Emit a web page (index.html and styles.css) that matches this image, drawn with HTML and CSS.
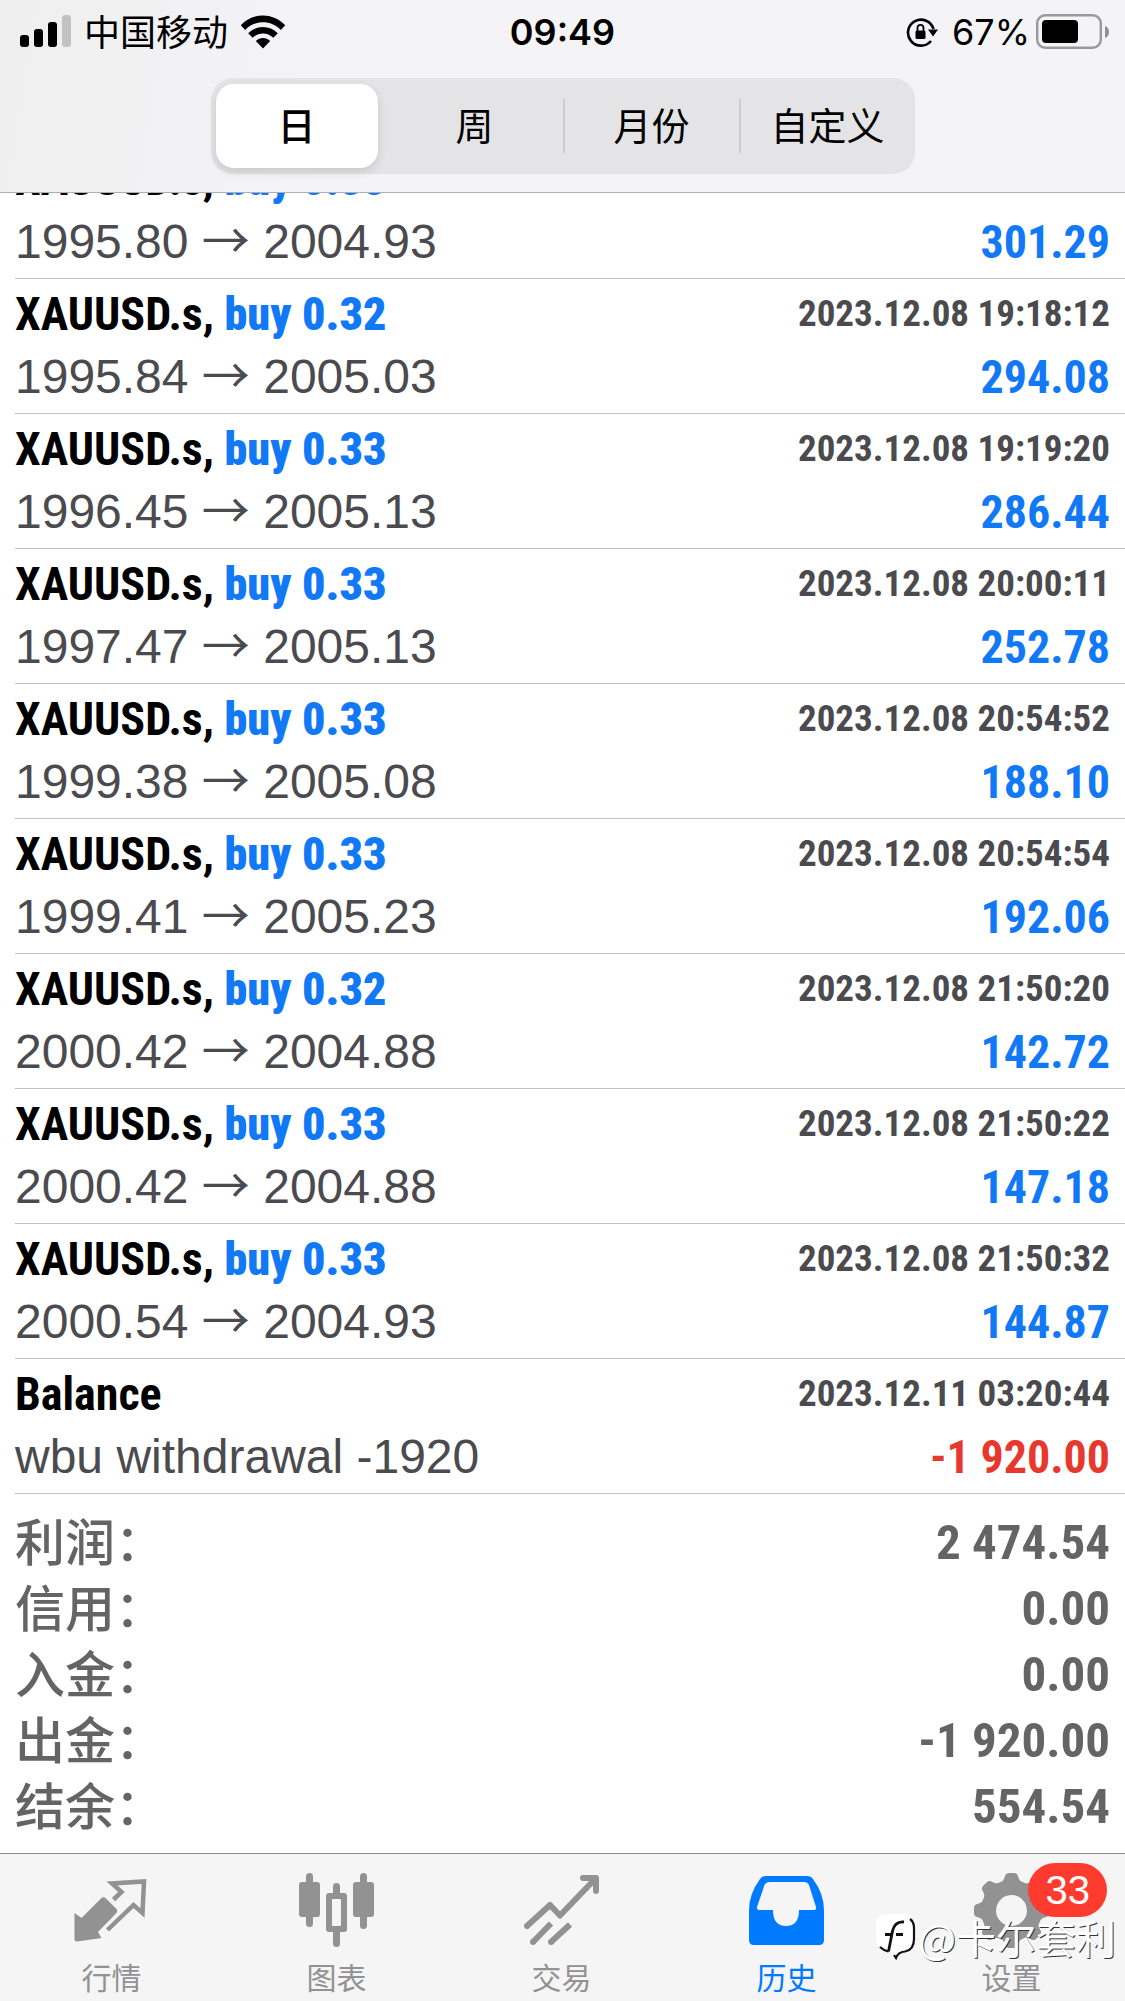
FILE: index.html
```html
<!DOCTYPE html>
<html lang="zh-CN">
<head>
<meta charset="utf-8">
<meta name="viewport" content="width=device-width, initial-scale=1">
<title>历史</title>
<link rel="stylesheet" href="styles.css">
</head>
<body>
<div class="app">
  <header class="top">
    <div class="status">
      <div class="status-left">
        <svg width="52" height="34" viewBox="0 0 52 34" aria-hidden="true">
          <rect x="0" y="20" width="9" height="12" rx="3"/>
          <rect x="14" y="14" width="9" height="18" rx="3"/>
          <rect x="28" y="7" width="9" height="25" rx="3"/>
          <rect x="42" y="0" width="9" height="32" rx="3" fill="#c2c2c3"/>
        </svg>
        <span class="carrier">中国移动</span>
        <svg width="46" height="34" viewBox="0 0 46 34" aria-hidden="true">
          <path d="M.8 10.300C13-2.800 33-2.800 45.200 10.300L40.800 14.900C31 4.800 15 4.800 5.200 14.900Z"/>
          <path d="M8.200 18.200C16.500 9.800 29.500 9.800 37.800 18.200L33.300 22.700C27.500 17 18.500 17 12.700 22.700Z"/>
          <path d="M15.800 26C20 22 26 22 30.200 26L23 33.500Z"/>
        </svg>
      </div>
      <time class="clock">09:49</time>
      <div class="status-right">
        <svg width="32" height="32" viewBox="0 0 32 32" aria-hidden="true">
          <path d="M27.500 13A13 13 0 1 0 25 25" fill="none" stroke="#000" stroke-width="2.600"/>
          <path d="M22 13.500H32L27 20.500Z"/>
          <rect x="9.500" y="14.500" width="10" height="8.500" rx="1.500"/>
          <path d="M11.500 15V11.800a3 3 0 0 1 6 0V15" fill="none" stroke="#000" stroke-width="1.800"/>
        </svg>
        <span class="percent">67%</span>
        <svg width="74" height="36" viewBox="0 0 74 36" aria-hidden="true">
          <rect x="1.200" y="1.200" width="63.600" height="32.600" rx="8" fill="none" stroke="#9a9a9b" stroke-width="2.400"/>
          <rect x="6" y="6" width="36" height="23" rx="4"/>
          <path d="M69 12Q73 13.500 73 18T69 24Z" fill="#8f8f90"/>
        </svg>
      </div>
    </div>
    <div class="segments">
      <button class="segment segment-on" type="button">日</button>
      <button class="segment" type="button">周</button>
      <button class="segment segment-ruled" type="button">月份</button>
      <button class="segment segment-ruled" type="button">自定义</button>
    </div>
  </header>

  <main class="history">
    <ul class="deals">
      <li class="deal"><span class="name">XAUUSD.s, <b class="side">buy 0.33</b></span><span class="date"></span><span class="detail">1995.80 <i class="arrow">→</i> 2004.93</span><span class="profit">301.29</span></li>
      <li class="deal"><span class="name">XAUUSD.s, <b class="side">buy 0.32</b></span><time class="date">2023.12.08 19:18:12</time><span class="detail">1995.84 <i class="arrow">→</i> 2005.03</span><span class="profit">294.08</span></li>
      <li class="deal"><span class="name">XAUUSD.s, <b class="side">buy 0.33</b></span><time class="date">2023.12.08 19:19:20</time><span class="detail">1996.45 <i class="arrow">→</i> 2005.13</span><span class="profit">286.44</span></li>
      <li class="deal"><span class="name">XAUUSD.s, <b class="side">buy 0.33</b></span><time class="date">2023.12.08 20:00:11</time><span class="detail">1997.47 <i class="arrow">→</i> 2005.13</span><span class="profit">252.78</span></li>
      <li class="deal"><span class="name">XAUUSD.s, <b class="side">buy 0.33</b></span><time class="date">2023.12.08 20:54:52</time><span class="detail">1999.38 <i class="arrow">→</i> 2005.08</span><span class="profit">188.10</span></li>
      <li class="deal"><span class="name">XAUUSD.s, <b class="side">buy 0.33</b></span><time class="date">2023.12.08 20:54:54</time><span class="detail">1999.41 <i class="arrow">→</i> 2005.23</span><span class="profit">192.06</span></li>
      <li class="deal"><span class="name">XAUUSD.s, <b class="side">buy 0.32</b></span><time class="date">2023.12.08 21:50:20</time><span class="detail">2000.42 <i class="arrow">→</i> 2004.88</span><span class="profit">142.72</span></li>
      <li class="deal"><span class="name">XAUUSD.s, <b class="side">buy 0.33</b></span><time class="date">2023.12.08 21:50:22</time><span class="detail">2000.42 <i class="arrow">→</i> 2004.88</span><span class="profit">147.18</span></li>
      <li class="deal"><span class="name">XAUUSD.s, <b class="side">buy 0.33</b></span><time class="date">2023.12.08 21:50:32</time><span class="detail">2000.54 <i class="arrow">→</i> 2004.93</span><span class="profit">144.87</span></li>
      <li class="deal"><span class="name">Balance</span><time class="date">2023.12.11 03:20:44</time><span class="detail">wbu withdrawal -1920</span><span class="profit loss">-1 920.00</span></li>
    </ul>
    <dl class="totals">
      <div class="total"><dt>利润：</dt><dd>2 474.54</dd></div>
      <div class="total"><dt>信用：</dt><dd>0.00</dd></div>
      <div class="total"><dt>入金：</dt><dd>0.00</dd></div>
      <div class="total"><dt>出金：</dt><dd>-1 920.00</dd></div>
      <div class="total"><dt>结余：</dt><dd>554.54</dd></div>
    </dl>
  </main>

  <nav class="tabs">
    <a class="tab" href="#quotes">
      <svg width="75" height="76" viewBox="0 0 75 76" aria-hidden="true">
        <path d="M.5 40L7.500 45L26 26.500Q29 22.500 32 25.500L42 35.500Q44.500 38 42 40.500L24 59L27.500 65L3 68.500Q.5 68.500 .5 66Z" fill="currentColor"/>
        <path d="M39.500 26.500L47.500 19L38 10.500L70 8.500L68.500 40L59.500 32L33.500 57" fill="none" stroke="currentColor" stroke-width="4.500"/>
      </svg>
      <span>行情</span>
    </a>
    <a class="tab" href="#chart">
      <svg width="75" height="76" viewBox="0 0 75 76" aria-hidden="true">
        <g fill="currentColor">
          <rect x="7" y="0" width="7" height="54" rx="3.500"/><rect x="0" y="9" width="21" height="35" rx="3"/>
          <rect x="61" y="0" width="7" height="56" rx="3.500"/><rect x="54" y="9" width="21" height="35" rx="3"/>
          <rect x="34" y="10" width="7" height="14" rx="3.500"/><rect x="34" y="54" width="7" height="20" rx="3.500"/>
          <path fill-rule="evenodd" d="M30 20H45Q48 20 48 23V56Q48 59 45 59H30Q27 59 27 56V23Q27 20 30 20ZM34 26Q33 26 33 27V52Q33 53 34 53H41Q42 53 42 52V27Q42 26 41 26Z"/>
        </g>
      </svg>
      <span>图表</span>
    </a>
    <a class="tab" href="#trade">
      <svg width="75" height="76" viewBox="0 0 75 76" aria-hidden="true">
        <path d="M3 53L26 32L36 42.500L71 6M59 5H72V18" fill="none" stroke="currentColor" stroke-width="6" stroke-linecap="round" stroke-linejoin="round"/>
        <path d="M27 50.500L9 69M46 51.500L27 69" fill="none" stroke="currentColor" stroke-width="6"/>
        <circle cx="9" cy="69" r="3" fill="currentColor"/><circle cx="27" cy="69" r="3" fill="currentColor"/>
      </svg>
      <span>交易</span>
    </a>
    <a class="tab tab-on" href="#history">
      <svg width="75" height="76" viewBox="0 0 75 76" aria-hidden="true">
        <path fill="currentColor" fill-rule="evenodd" d="M17 3H58Q62 3 64 6Q75 21 75 37V67Q75 72 70 72H5Q0 72 0 67V37Q0 21 11 6Q13 3 17 3ZM21 9Q17 9 15.500 12L8 34Q8 37 10 37H24Q24 53 37 53T50 37H65Q68 37 67 34L60 12Q58.500 9 55 9Z"/>
      </svg>
      <span>历史</span>
    </a>
    <a class="tab" href="#settings">
      <svg width="75" height="76" viewBox="0 0 75 76" aria-hidden="true">
        <g fill="currentColor">
          <path fill-rule="evenodd" d="M37.500 7a30.500 30.500 0 1 0 .01 0ZM37.500 22a15.500 15.500 0 1 1-.01 0Z"/>
          <g id="cog">
            <path d="M26 10Q30 8 31 3Q32 0 35 0H40Q43 0 44 3Q45 8 49 10Z"/>
            <path d="M26 65Q30 67 31 72Q32 75 35 75H40Q43 75 44 72Q45 67 49 65Z"/>
          </g>
          <use href="#cog" transform="rotate(45 37.500 37.500)"/>
          <use href="#cog" transform="rotate(90 37.500 37.500)"/>
          <use href="#cog" transform="rotate(135 37.500 37.500)"/>
        </g>
      </svg>
      <span>设置</span>
      <em class="badge">33</em>
    </a>
    <div class="credit">
      <svg width="40" height="46" viewBox="0 0 40 46" aria-hidden="true">
        <path d="M11 0H27Q38 0 38 12V25Q38 36 29 37.500Q22 38 20 44L18 38L9 35Q0 33 0 24V12Q0 0 11 0Z" fill="#fff"/>
        <path d="M28 8Q19 7 16.500 17L12.500 37.500M9 20.500H15.500M20 20.500H27" fill="none" stroke="#111" stroke-width="2.800"/>
        <path d="M34 5Q38 8 38 14V25Q38 36 29 37.500Q22 38 20 44L18 41M4 33Q7 36 12.500 37.500" fill="none" stroke="#111" stroke-width="2.200"/>
      </svg>
      <span>@卡尔套利</span>
    </div>
  </nav>
</div>
</body>
</html>
```
FILE: styles.css
```css
* { box-sizing: border-box; }

body {
  margin: 0;
  background: #fff;
  color: #000;
  font-family: "Liberation Sans", "Noto Sans CJK SC", sans-serif;
}

.app {
  display: flex;
  flex-direction: column;
  height: 100vh;
}

/* Status bar and period switch */
.top {
  flex: none;
  padding-bottom: 18px;
  border-bottom: 1px solid #b0b0b2;
  background: linear-gradient(100deg, #efefef, #f4f4f7 30%, #f4f4f6);
}

.status {
  display: grid;
  grid-template-columns: 1fr auto 1fr;
  align-items: center;
  height: 60px;
  padding: 0 15px;
  font-family: Inter, "Noto Sans CJK SC", sans-serif;
  font-size: 36px;
  line-height: 60px;
}

.status-left,
.status-right {
  display: flex;
  align-items: center;
}

.status-left {
  gap: 12px;
  padding-left: 5px;
}

.status-right {
  justify-content: flex-end;
  gap: 6px;
}

.carrier {
  padding-bottom: 3px;
  font-family: "Noto Sans CJK SC", sans-serif;
}

.clock {
  font-weight: 600;
}

.percent {
  padding: 0 0 0 8px;
}

.segments {
  display: grid;
  grid-template-columns: repeat(4, 1fr);
  width: 63%;
  max-width: 704px;
  height: 96px;
  margin: 18px auto 0;
  padding: 6px 0;
  border-radius: 22px;
  background: #e4e4e6;
}

.segment {
  margin: 15px 0;
  padding: 0 0 4px;
  border: 0;
  background: none;
  color: #000;
  font: 38px/50px "Noto Sans CJK SC", sans-serif;
}

.segment-ruled { border-left: 2px solid #cdcdd0; }

.segment-on {
  margin: 0 9px 0 5px;
  border-radius: 18px;
  background: #fff;
  box-shadow: 0 4px 10px rgba(0, 0, 0, .12);
  font-weight: 500;
}

/* Deals, scrolled to the end */
.history {
  display: flex;
  flex: 1;
  flex-direction: column;
  justify-content: flex-end;
  min-height: 0;
  overflow: hidden;
}

.deals,
.totals,
.total dd {
  margin: 0;
}

.deals {
  padding: 0 0 0 15px;
  list-style: none;
}

.deal {
  display: grid;
  grid-template-columns: 1fr auto;
  grid-template-rows: 62px 64px;
  height: 135px;
  padding: 4px 15px 0 0;
  border-bottom: 1px solid #c2c2c4;
  color: #4b4b4f;
  line-height: 64px;
  white-space: nowrap;
}

.name,
.date,
.profit,
.total dd {
  font-family: "Roboto Condensed", "Liberation Sans", sans-serif;
  font-weight: 700;
}

.name {
  color: #000;
  font-size: 46px;
  line-height: 62px;
}

.side,
.profit {
  color: #1279f6;
}

.date {
  font-size: 37px;
  line-height: 62px;
  text-align: right;
}

.detail { font-size: 48px; }

.arrow {
  font-family: "Noto Sans CJK SC", sans-serif;
  font-style: normal;
  line-height: 1px;
}

.profit {
  font-size: 46px;
  text-align: right;
}

.loss { color: #e8372c; }

/* Account totals */
.totals {
  padding: 17px 15px 12px;
  color: #646464;
}

.total {
  display: flex;
  align-items: flex-start;
  justify-content: space-between;
  height: 66px;
}

.total dt {
  font: 500 50px/56px "Noto Sans CJK SC", sans-serif;
}

.total dd {
  font-size: 49px;
  line-height: 64px;
}

/* Tab bar */
.tabs {
  position: relative;
  display: grid;
  flex: none;
  grid-template-columns: repeat(5, 1fr);
  height: 148px;
  border-top: 1px solid #8e8e90;
  background: #f5f5f5;
}

.tab {
  position: relative;
  display: flex;
  flex-direction: column;
  align-items: center;
  gap: 5px;
  padding: 19px 2px 0 0;
  color: #929292;
  font: 30px/44px "Noto Sans CJK SC", sans-serif;
  text-decoration: none;
}

.tab-on { color: #007aff; }

.badge {
  position: absolute;
  top: 9px;
  left: 57%;
  min-width: 79px;
  border-radius: 27px;
  background: #ff3b30;
  color: #fff;
  font: 40px/54px "Liberation Sans", sans-serif;
  text-align: center;
}

.credit {
  position: absolute;
  right: 9px;
  bottom: 36px;
  display: flex;
  align-items: center;
  gap: 2px;
  color: #fff;
  font: 40px/56px "Noto Sans CJK SC", sans-serif;
  text-shadow: 1px 1px 0 #333;
}
```
